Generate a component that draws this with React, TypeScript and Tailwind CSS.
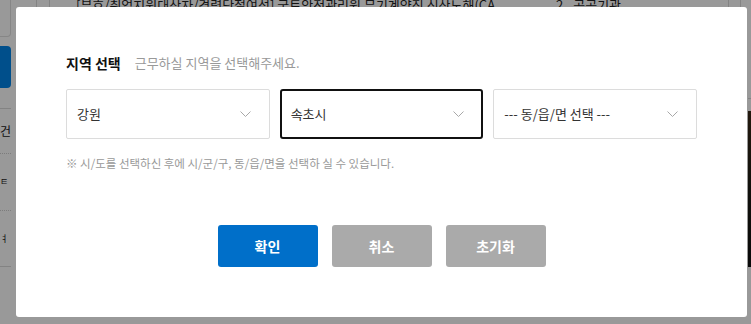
import { useState } from 'react';

const font = { fontFamily: '"Noto Sans CJK KR", "Noto Sans", sans-serif' };

function Chevron() {
  return (
    <svg width="11" height="6" viewBox="0 0 11 6" fill="none" className="shrink-0">
      <path d="M0.5 0.5L5.5 5.5L10.5 0.5" stroke="#a8a8a8" strokeWidth="1" />
    </svg>
  );
}

function SelectBox({ value, focused }: { value: string; focused?: boolean }) {
  return (
    <div
      className={`flex h-[50px] items-center justify-between bg-white ${
        focused
          ? 'rounded-[3px] border-2 border-[#111] pl-[9px] pr-[17px]'
          : 'rounded-[2px] border border-[#dcdcdc] pl-[10px] pr-[18px]'
      }`}
    >
      <span className="text-[13px] leading-[18px] text-[#333]">{value}</span>
      <Chevron />
    </div>
  );
}

export default function App() {
  const [sido] = useState('강원');
  const [sigungu] = useState('속초시');

  return (
    <div className="relative h-[324px] w-[751px] overflow-hidden bg-white" style={font}>
      {/* page behind the dialog */}
      <div className="flex h-full">
        {/* sidebar */}
        <div className="w-[11px] shrink-0 overflow-hidden">
          <div className="h-[37px] rounded-br-[4px] border-r border-b border-[#e0e0e0]" />
          <div className="mt-[9px] h-[42px] rounded-r-[4px] bg-[#0084e8]" />
          <div className="mt-[20px] border-t border-[#dadada]">
            <div className="flex h-[45px] items-center justify-end border-b border-dotted border-[#cfcfcf] text-[12px] text-[#222]">
              건
            </div>
            <div className="flex h-[57px] items-center justify-start border-b border-dotted border-[#cfcfcf] text-[9px] text-[#222]">
              ㅌ
            </div>
            <div className="flex h-[56px] items-center justify-start border-b border-[#dadada] text-[9px] text-[#222]">
              ㅕ
            </div>
          </div>
        </div>

        {/* main table */}
        <div className="flex flex-1 flex-col">
          <div className="-mt-[7px] flex h-[24px] text-[13px] leading-[24px] text-[#222]">
            <div className="ml-[25px] w-[13px] border-l border-[#dadada]" />
            <div className="flex w-[679px] border-l border-[#dadada]">
              <span className="ml-[26px] w-[465px] truncate whitespace-nowrap">
                [부호/취업지원대상자/경력단절여성] 국토안전관리원 무기계약직 신산노해(CA
              </span>
              <span className="ml-[15px]">2</span>
              <span className="ml-[10px]">공공기관</span>
            </div>
            <div className="w-[13px] border-l border-r border-[#dadada]" />
          </div>
        </div>

        {/* right strip */}
        <div className="w-[3px] shrink-0">
          <div className="mt-[98px] border-t border-[#dadada]" />
          <div className="mt-[12px] h-[156px] bg-gradient-to-b from-[#3a2a18] via-[#1c1c14] to-[#101010]" />
        </div>
      </div>

      {/* dim overlay */}
      <div className="absolute inset-0 bg-black/40" />

      {/* dialog */}
      <div className="absolute left-[16px] top-[7px] flex h-[310px] w-[731px] flex-col rounded-[3px] bg-white px-[50px] pt-[46px]">
        <div className="flex items-center gap-[14px]">
          <h2 className="text-[14px] font-bold leading-[20px] text-[#111]">지역 선택</h2>
          <p className="text-[13px] leading-[20px] text-[#999]">근무하실 지역을 선택해주세요.</p>
        </div>

        <div className="mt-[16px] grid grid-cols-3 gap-[10px]">
          <SelectBox value={sido} />
          <SelectBox value={sigungu} focused />
          <SelectBox value="--- 동/읍/면 선택 ---" />
        </div>

        <p className="mt-[16px] text-[11.5px] leading-[16px] text-[#999]">
          ※ 시/도를 선택하신 후에 시/군/구, 동/읍/면을 선택하 실 수 있습니다.
        </p>

        <div className="mt-[54px] flex justify-center gap-[14px]">
          <button className="h-[42px] w-[100px] rounded-[3px] bg-[#006fc9] text-[14px] font-bold text-white">
            확인
          </button>
          <button className="h-[42px] w-[100px] rounded-[3px] bg-[#aaaaaa] text-[14px] font-bold text-white">
            취소
          </button>
          <button className="h-[42px] w-[100px] rounded-[3px] bg-[#aaaaaa] text-[14px] font-bold text-white">
            초기화
          </button>
        </div>
      </div>
    </div>
  );
}
